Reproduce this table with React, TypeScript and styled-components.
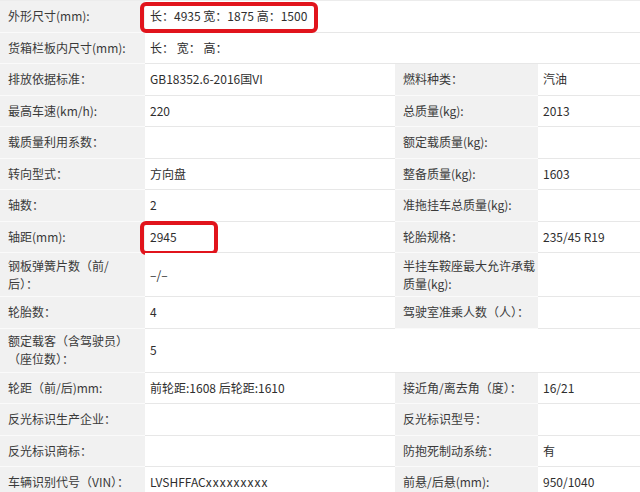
import React from 'react';
import styled, { createGlobalStyle } from 'styled-components';

const GlobalStyle = createGlobalStyle`
  *, *::before, *::after { box-sizing: border-box; }
  html, body { margin: 0; padding: 0; background: #fff; }
  body { font-family: "Noto Sans CJK SC", "Noto Sans", sans-serif; }
`;

const Sheet = styled.div`
  width: 640px;
  height: 492px;
  overflow: hidden;
  border-top: 1px solid #ececec;
`;

const Row = styled.div`
  display: grid;
  grid-template-columns: 145px 250px 143px 1fr;
  min-height: 31.5px;
`;

const Label = styled.div<{ $blank?: boolean }>`
  display: flex;
  align-items: center;
  padding: 3.5px 0 3.5px 8px;
  background: ${(p) => (p.$blank ? '#ffffff' : '#f1f1f1')};
  border-bottom: 1px solid ${(p) => (p.$blank ? '#e7e7e7' : '#fafafa')};
  color: #3a3a3a;
  font-size: 12px;
  line-height: 18px;
  white-space: nowrap;
`;

const Value = styled.div<{ $span?: number }>`
  position: relative;
  grid-column: span ${(p) => p.$span ?? 1};
  display: flex;
  align-items: center;
  padding: 3.5px 4px 3.5px 5px;
  background: #fff;
  border-bottom: 1px solid #e7e7e7;
  color: #2e2e2e;
  font-size: 12px;
  line-height: 18px;
  white-space: nowrap;
`;

const Masked = styled.span`
  letter-spacing: 1px;
`;

const Marker = styled.span<{ $w: number; $h: number; $top: number }>`
  position: absolute;
  left: -5px;
  top: ${(p) => p.$top}px;
  width: ${(p) => p.$w}px;
  height: ${(p) => p.$h}px;
  border: 4px solid #e1141c;
  border-radius: 6px;
  pointer-events: none;
`;

type Cell = { text?: React.ReactNode; marker?: { w: number; h: number; top: number } };
type RowData =
  | { kind: 'wide'; label: React.ReactNode; value: Cell }
  | { kind: 'quad'; label: React.ReactNode; value: Cell; label2: React.ReactNode; value2: Cell };

const rows: RowData[] = [
  { kind: 'wide', label: '外形尺寸(mm):', value: { text: '长：4935 宽：1875 高：1500', marker: { w: 178, h: 31, top: 1 } } },
  { kind: 'wide', label: '货箱栏板内尺寸(mm):', value: { text: '长： 宽： 高：' } },
  { kind: 'quad', label: '排放依据标准：', value: { text: 'GB18352.6-2016国VI' }, label2: '燃料种类：', value2: { text: '汽油' } },
  { kind: 'quad', label: '最高车速(km/h):', value: { text: '220' }, label2: '总质量(kg):', value2: { text: '2013' } },
  { kind: 'quad', label: '载质量利用系数：', value: {}, label2: '额定载质量(kg):', value2: {} },
  { kind: 'quad', label: '转向型式：', value: { text: '方向盘' }, label2: '整备质量(kg):', value2: { text: '1603' } },
  { kind: 'quad', label: '轴数：', value: { text: '2' }, label2: '准拖挂车总质量(kg):', value2: {} },
  { kind: 'quad', label: '轴距(mm):', value: { text: '2945', marker: { w: 78, h: 34, top: -1 } }, label2: '轮胎规格：', value2: { text: '235/45 R19' } },
  {
    kind: 'quad',
    label: (<>钢板弹簧片数（前/<br />后）：</>),
    value: { text: '–/–' },
    label2: (<>半挂车鞍座最大允许承载<br />质量(kg):</>),
    value2: {},
  },
  { kind: 'quad', label: '轮胎数：', value: { text: '4' }, label2: '驾驶室准乘人数（人）：', value2: {} },
  { kind: 'wide', label: (<>额定载客（含驾驶员）<br />（座位数）：</>), value: { text: '5' } },
  { kind: 'quad', label: '轮距（前/后)mm:', value: { text: '前轮距:1608 后轮距:1610' }, label2: '接近角/离去角（度）：', value2: { text: '16/21' } },
  { kind: 'quad', label: '反光标识生产企业：', value: {}, label2: '反光标识型号：', value2: {} },
  { kind: 'quad', label: '反光标识商标：', value: {}, label2: '防抱死制动系统：', value2: { text: '有' } },
  {
    kind: 'quad',
    label: '车辆识别代号（VIN）：',
    value: { text: (<>LVSHFFAC<Masked>xxxxxxxxx</Masked></>) },
    label2: '前悬/后悬(mm):',
    value2: { text: '950/1040' },
  },
];

const ValueCell: React.FC<{ cell: Cell; span?: number }> = ({ cell, span }) => (
  <Value $span={span}>
    {cell.text}
    {cell.marker && <Marker $w={cell.marker.w} $h={cell.marker.h} $top={cell.marker.top} />}
  </Value>
);

export default function App() {
  return (
    <>
      <GlobalStyle />
      <Sheet>
        {rows.map((r, i) => (
          <Row key={i}>
            <Label>{r.label}</Label>
            {r.kind === 'wide' && <ValueCell cell={r.value} span={3} />}
            {r.kind === 'quad' && (
              <>
                <ValueCell cell={r.value} />
                <Label>{r.label2}</Label>
                <ValueCell cell={r.value2} />
              </>
            )}
          </Row>
        ))}
      </Sheet>
    </>
  );
}
